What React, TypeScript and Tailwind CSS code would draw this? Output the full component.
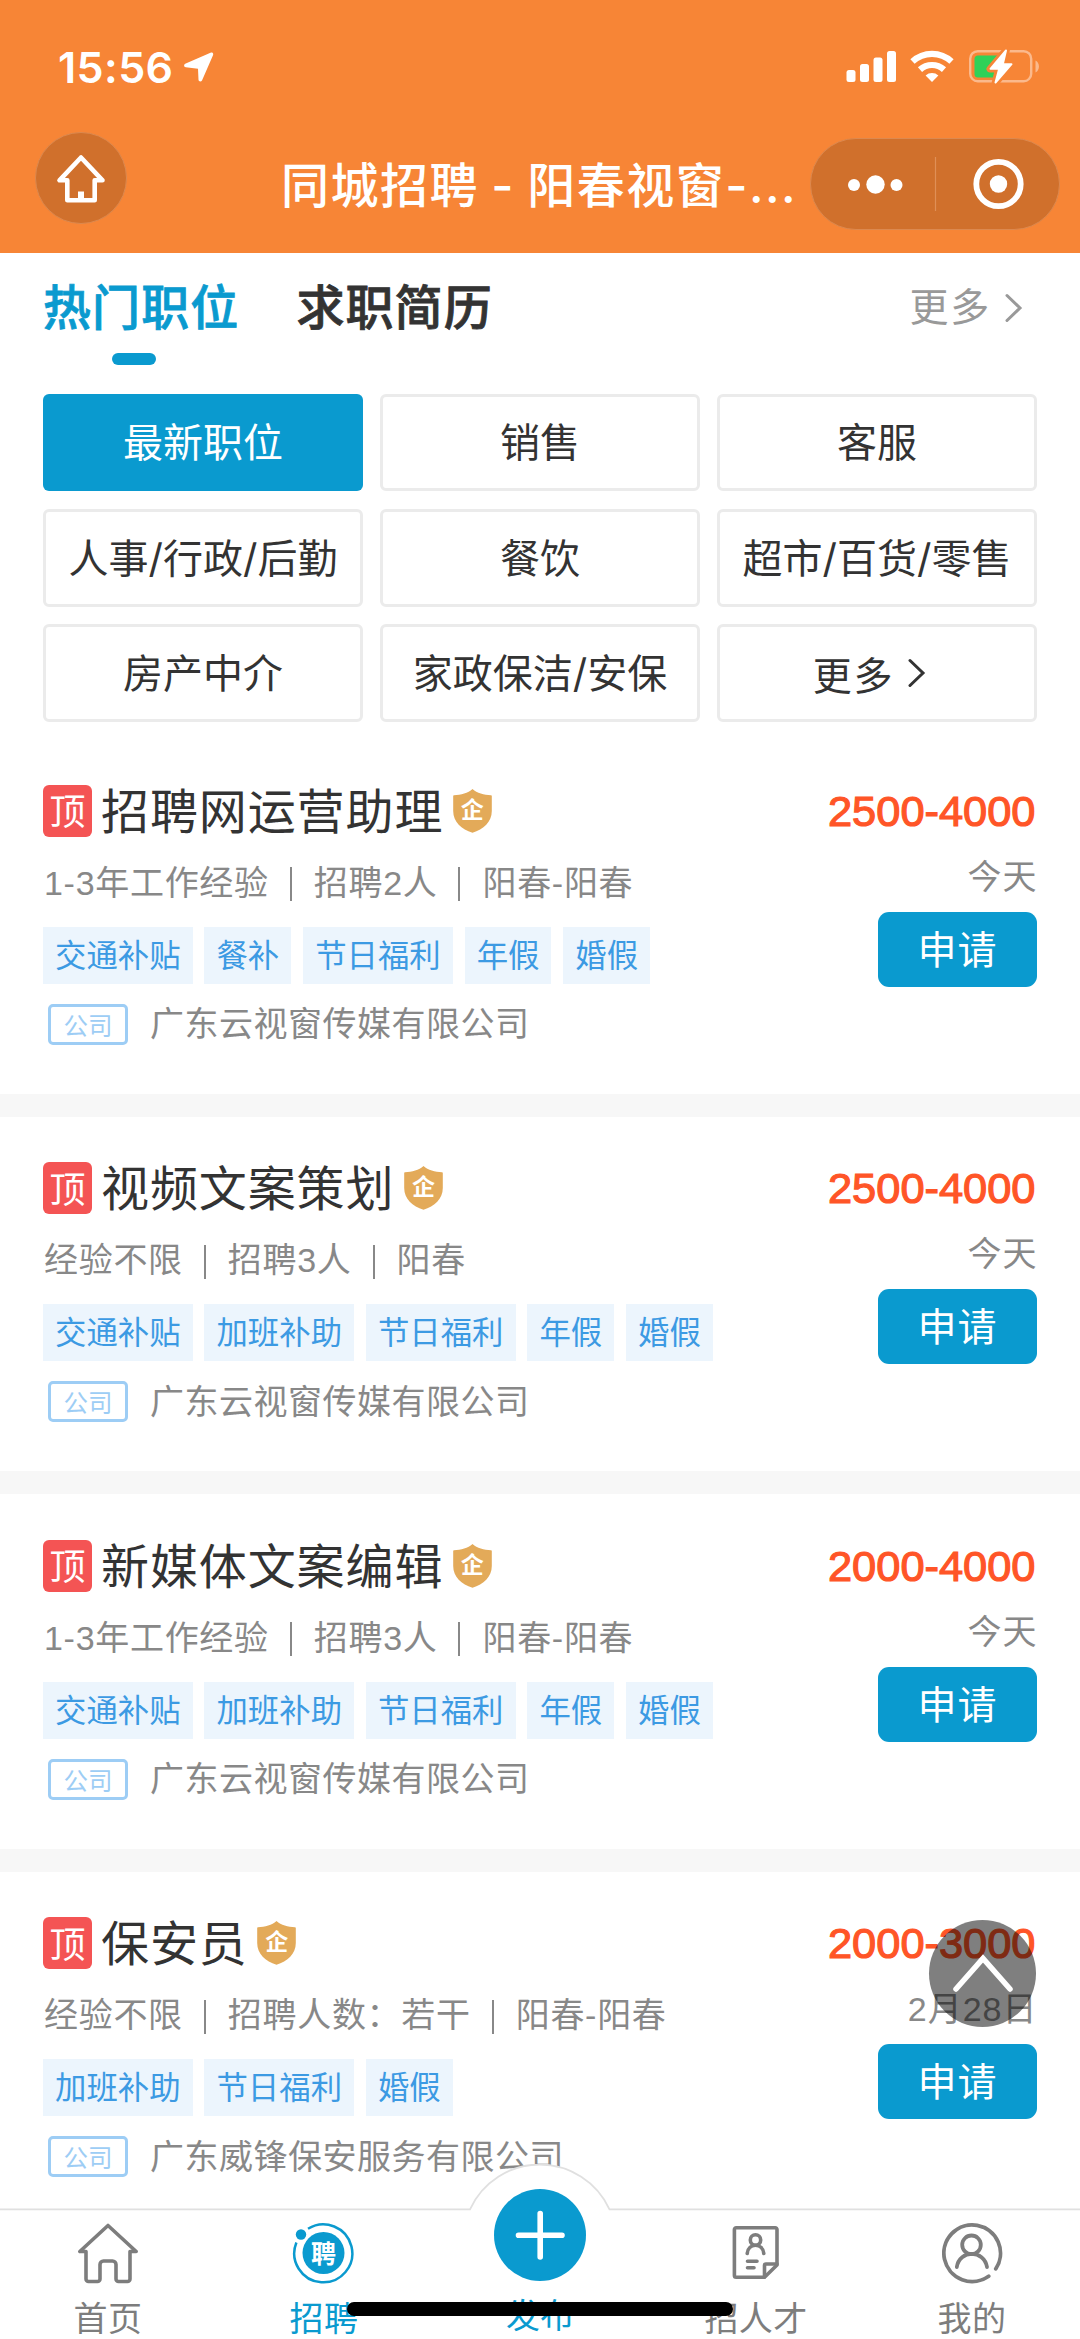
import React from "react";

type Job = {
  title: string;
  meta: string[];
  tags: string[];
  company: string;
  salary: string;
  date: string;
};

const categories = [
  "最新职位",
  "销售",
  "客服",
  "人事/行政/后勤",
  "餐饮",
  "超市/百货/零售",
  "房产中介",
  "家政保洁/安保",
];

const jobs: Job[] = [
  {
    title: "招聘网运营助理",
    meta: ["1-3年工作经验", "招聘2人", "阳春-阳春"],
    tags: ["交通补贴", "餐补", "节日福利", "年假", "婚假"],
    company: "广东云视窗传媒有限公司",
    salary: "2500-4000",
    date: "今天",
  },
  {
    title: "视频文案策划",
    meta: ["经验不限", "招聘3人", "阳春"],
    tags: ["交通补贴", "加班补助", "节日福利", "年假", "婚假"],
    company: "广东云视窗传媒有限公司",
    salary: "2500-4000",
    date: "今天",
  },
  {
    title: "新媒体文案编辑",
    meta: ["1-3年工作经验", "招聘3人", "阳春-阳春"],
    tags: ["交通补贴", "加班补助", "节日福利", "年假", "婚假"],
    company: "广东云视窗传媒有限公司",
    salary: "2000-4000",
    date: "今天",
  },
  {
    title: "保安员",
    meta: ["经验不限", "招聘人数：若干", "阳春-阳春"],
    tags: ["加班补助", "节日福利", "婚假"],
    company: "广东威锋保安服务有限公司",
    salary: "2000-3000",
    date: "2月28日",
  },
];

function Chevron({ className }: { className: string }) {
  return (
    <svg className={className} width="18" height="30" viewBox="0 0 18 30" fill="none" stroke="currentColor" strokeWidth="3" strokeLinecap="round">
      <path d="M2 2.5 15 15 2 27.5" />
    </svg>
  );
}

function StatusBar() {
  return (
    <div className="flex h-[132px] items-start justify-between pt-[46px] pr-[39px] pl-[58px]">
      <div className="flex items-center">
        <span className="h-[42px] w-[126px] font-['Inter'] text-[43px] leading-[42px] font-semibold tracking-[0.400px]">15:56</span>
        <svg className="-mt-px" width="30" height="30" viewBox="0 0 30 30" fill="currentColor">
          <path d="M1.200 11.800 26.500.700c1.900-.7 3.200.6 2.500 2.500L18 28.400c-.8 1.700-3.400 1.400-3.500-.6L14 16.800 1.800 15.300C-.2 15-.5 12.700 1.200 11.800Z" />
        </svg>
      </div>
      <svg width="195" height="38" viewBox="0 0 195 38">
        <g fill="#fff">
          <rect x="0.500" y="24" width="9" height="12" rx="2.500" />
          <rect x="14" y="18" width="9" height="18" rx="2.500" />
          <rect x="27.500" y="11.500" width="9" height="24.500" rx="2.500" />
          <rect x="41" y="5" width="9" height="31" rx="2.500" />
        </g>
        <g fill="none" stroke="#fff" strokeWidth="6.200">
          <path d="M66.500 15.600a28.500 28.500 0 0 1 39 0" />
          <path d="M74 23.600a18 18 0 0 1 24 0" />
        </g>
        <path d="M79.600 29.400a10 10 0 0 1 12.800 0L86 36Z" fill="#fff" />
        <rect x="124.200" y="5.200" width="61" height="30" rx="7.500" fill="none" stroke="#fbb98c" strokeWidth="2.400" />
        <path d="M189.500 14.500c4.600 2 4.600 10 0 12Z" fill="#fbb98c" />
        <path d="M132 9.500h21l-5 22h-16a3.500 3.500 0 0 1-3.500-3.500V13a3.500 3.500 0 0 1 3.500-3.500Z" fill="#30d158" />
        <path d="M160.500 3.500 144 23h8.500l-3.500 14.500L165.500 18H157.200Z" fill="#f78536" stroke="#f78536" strokeWidth="7" strokeLinejoin="round" />
        <path d="M160 4.500 144.500 22.800h8.700l-3.700 13.700L165.500 18.200H156.800Z" fill="#fff" stroke="#fff" strokeWidth="2" strokeLinejoin="round" />
      </svg>
    </div>
  );
}

function NavBar() {
  return (
    <div className="flex h-[121px] items-start">
      <div className="ml-[35px] flex h-[92px] w-[92px] items-center justify-center rounded-full border border-[#dc894f] bg-[#d0702c]">
        <svg width="52" height="52" viewBox="0 0 52 52" fill="none" stroke="#fff" strokeWidth="4.600" strokeLinejoin="round" strokeLinecap="round">
          <path d="M26 5.500 4.500 28.300h7.800v19.900h27.400V28.300h7.800Z" />
          <path d="M26 48v-8.500" strokeWidth="6" strokeLinecap="butt" />
        </svg>
      </div>
      <div className="mt-[25px] ml-[154px] h-[58px] w-[529px] font-['Inter','Noto_Sans_CJK_SC',sans-serif] text-[48px] leading-[58px] font-medium tracking-[1.500px] whitespace-nowrap [word-spacing:-2px]">
        同城招聘 - 阳春视窗-...
      </div>
      <div className="mt-[6px] flex h-[92px] w-[250px] items-center rounded-full border border-[#dc894f] bg-[#d0702c]">
        <svg width="248" height="90" viewBox="0 0 248 90">
          <g fill="#fff">
            <circle cx="43" cy="46" r="6" />
            <circle cx="64.500" cy="45.500" r="9.200" />
            <circle cx="85.500" cy="46" r="6" />
            <circle cx="187.500" cy="45" r="8.700" />
          </g>
          <circle cx="187.500" cy="45" r="22.200" fill="none" stroke="#fff" strokeWidth="5.800" />
          <path d="M124.500 18v54" stroke="#e08f57" strokeWidth="1.200" />
        </svg>
      </div>
    </div>
  );
}

function Shield() {
  return (
    <div className="relative flex h-[44px] w-[39px] justify-center">
      <svg className="absolute inset-0" width="39" height="44" viewBox="0 0 39 44" fill="#e3aa59">
        <path d="M19.500 0C24 4 31 6 38 6.300c.6 0 .8.300.8.800V22c0 11-8.300 18.500-19.300 21.800C8.500 40.500.2 33 .2 22V7.100c0-.5.2-.8.8-.8C8 6 15 4 19.500 0Z" />
      </svg>
      <span className="relative mt-[9px] text-[23px] leading-[24px] font-bold text-white">企</span>
    </div>
  );
}

function JobCard({ job }: { job: Job }) {
  return (
    <article className="flex h-[377.4px] shrink-0 justify-between border-b-[23px] border-[#f7f7f7] px-[43px] pt-[45.400px]">
      <div className="flex flex-col">
        <div className="flex h-[52px] items-center">
          <span className="flex h-[52px] w-[49px] items-center justify-center rounded-[6px] bg-[#f45454] text-[36px] leading-[52px] text-white">
            <span className="mt-[5px]">顶</span>
          </span>
          <h2 className="mt-[4px] ml-[9px] text-[48px] leading-[52px] font-normal tracking-[0.900px] text-[#333]">{job.title}</h2>
          <div className="ml-[9.500px]">
            <Shield />
          </div>
        </div>
        <div className="mt-[26px] ml-[1px] flex h-[41px] items-center text-[34px] leading-[41px] tracking-[0.700px] text-[#888]">
          {job.meta.map((m, i) => (
            <React.Fragment key={m}>
              {i > 0 && <span className="mr-[22px] ml-[21px] mt-[2px] h-[34px] w-[2px] bg-[#888]" />}
              <span>{m}</span>
            </React.Fragment>
          ))}
        </div>
        <div className="mt-[23px] flex h-[57px] gap-[11.900px] text-[31.400px] leading-[59px] text-[#3c9ae3]">
          {job.tags.map((t) => (
            <span key={t} className="bg-[#ecf5fd] px-[12px]">
              {t}
            </span>
          ))}
        </div>
        <div className="mt-[20px] flex h-[41px] items-center">
          <span className="ml-[5px] flex h-[41px] w-[80px] items-center justify-center rounded-[5px] border-[3px] border-[#9dcdf5] text-[24.500px] leading-[36px] text-[#9dcdf5]">
            <span className="mt-[5px]">公司</span>
          </span>
          <span className="mt-px ml-[22px] text-[34px] leading-[41px] tracking-[0.500px] text-[#888]">{job.company}</span>
        </div>
      </div>
      <div className="flex flex-col items-end">
        <div className="mr-[1.500px] h-[52px] text-[43.400px] leading-[53px] text-[#ff5527] [-webkit-text-stroke:1.200px_#ff5527]">{job.salary}</div>
        <div className="mt-[19px] mr-[-0.500px] h-[41px] text-[34px] leading-[43px] tracking-[1px] text-[#888]">{job.date}</div>
        <button className="mt-[15px] h-[75px] w-[159px] rounded-[11px] bg-[#0a9acf] pt-[2px] text-[39px] leading-[73px] tracking-[1px] text-white">申请</button>
      </div>
    </article>
  );
}

function TabItem({ label, active, children }: { label: string; active?: boolean; children: React.ReactNode }) {
  return (
    <div className={active ? "flex w-[216px] flex-col items-center text-[#0a9acf]" : "flex w-[216px] flex-col items-center text-[#7d7d7d]"}>
      <div className="mt-[12px] h-[64px]">{children}</div>
      <span className="mt-[15px] text-[34px] leading-[40px] tracking-[0.400px]">{label}</span>
    </div>
  );
}

function BottomBar() {
  return (
    <nav className="absolute bottom-0 left-0 h-[175px] w-[1080px]">
      <svg className="absolute inset-0" width="1080" height="175" viewBox="0 0 1080 175">
        <path d="M-2 45.300H470A76.700 76.700 0 0 1 609.500 45.300H1082V180H-2Z" fill="#fff" stroke="#e0e0e0" strokeWidth="1.800" />
      </svg>
      <div className="relative flex pt-[44px]">
        <TabItem label="首页">
          <svg className="-ml-px" width="64" height="64" viewBox="0 0 64 64" fill="none" stroke="currentColor" strokeWidth="3.600" strokeLinejoin="round">
            <path d="M32 5.500 3.800 31.500H10V59a2.500 2.500 0 0 0 2.500 2.500h9A2.500 2.500 0 0 0 24 59V44.500a3.500 3.500 0 0 1 3.500-3.500h9a3.500 3.500 0 0 1 3.500 3.500V59a2.500 2.500 0 0 0 2.500 2.500h9A2.500 2.500 0 0 0 54 59V31.500h6.200Z" />
          </svg>
        </TabItem>
        <TabItem label="招聘" active>
          <div className="relative flex h-[64px] w-[64px] items-center justify-center">
            <svg className="absolute inset-0" width="64" height="64" viewBox="0 0 64 64">
              <circle cx="31.500" cy="33" r="21" fill="currentColor" />
              <circle cx="9" cy="14.500" r="5.200" fill="currentColor" />
              <path d="M16 8.700A29 29 0 1 1 4.400 22.500" fill="none" stroke="currentColor" strokeWidth="2.500" />
            </svg>
            <span className="relative mt-[3px] -ml-px text-[25px] leading-[28px] font-bold text-white">聘</span>
          </div>
        </TabItem>
        <div className="flex w-[216px] flex-col items-center text-[#0a9acf]">
          <div className="-mt-[19px] h-[92px]">
            <svg width="92" height="92" viewBox="0 0 92 92">
              <circle cx="46" cy="46" r="46" fill="#0a9acf" />
              <path d="M24.500 46.200h43.500M46.200 24.500v43.500" stroke="#fff" strokeWidth="5.600" strokeLinecap="round" />
            </svg>
          </div>
          <span className="mt-[15px] text-[34px] leading-[40px]">发布</span>
        </div>
        <TabItem label="招人才">
          <svg width="64" height="64" viewBox="0 0 64 64" fill="none" stroke="currentColor" strokeWidth="3.600" strokeLinejoin="round" strokeLinecap="round">
            <path d="M53 45V9.500a1.800 1.800 0 0 0-1.800-1.800h-39a1.800 1.800 0 0 0-1.800 1.800v46a1.800 1.800 0 0 0 1.800 1.800H40.500Z" />
            <path d="M40.500 57V45.500a1.500 1.500 0 0 1 1.500-1.500H53" />
            <circle cx="31.500" cy="20" r="5.200" />
            <path d="M23.200 33.500c1-11 15.600-11 16.600 0M23.500 41.200h9.500M23.500 47.800h6.500" />
          </svg>
        </TabItem>
        <TabItem label="我的">
          <svg width="64" height="64" viewBox="0 0 64 64" fill="none" stroke="currentColor" strokeWidth="3.800" strokeLinecap="round">
            <path d="M48.700 56.200A28.300 28.300 0 1 1 55.800 48.800" />
            <circle cx="31.500" cy="24.800" r="9.300" />
            <path d="M16.800 47c2.500-17.500 27.400-17.500 30.200 0" />
          </svg>
        </TabItem>
      </div>
    </nav>
  );
}

export default function App() {
  return (
    <div className="relative flex h-[2339px] w-[1080px] flex-col overflow-hidden bg-white font-['Liberation_Sans','Noto_Sans_CJK_SC',sans-serif]">
      <header className="h-[253px] shrink-0 bg-[#f78536] text-white">
        <StatusBar />
        <NavBar />
      </header>

      <section className="h-[486.600px] shrink-0 px-[43px]">
        <div className="flex h-[140.500px] items-start justify-between pt-[26px]">
          <div className="flex gap-[57px] text-[48px] leading-[60px] font-medium tracking-[1.100px] text-[#333] [-webkit-text-stroke:0.800px_currentColor]">
            <div className="flex flex-col items-center text-[#0a9acf]">
              <span>热门职位</span>
              <span className="mt-[14px] -ml-[15px] h-[12px] w-[44px] rounded-full bg-[#0a9acf]" />
            </div>
            <span>求职简历</span>
          </div>
          <div className="-mt-px mr-[14px] flex items-center text-[39px] leading-[60px] tracking-[1.800px] text-[#999]">
            更多
            <Chevron className="ml-[14px]" />
          </div>
        </div>
        <div className="grid grid-cols-3 gap-x-[17px] gap-y-[17.500px] font-['Inter','Noto_Sans_CJK_SC',sans-serif]">
          {categories.map((c, i) => (
            <button
              key={c}
              className={
                i === 0
                  ? "h-[97.800px] rounded-[6px] bg-[#0a9acf] pt-[2px] text-[40px] text-white"
                  : "h-[97.800px] rounded-[6px] border-[3px] border-[#ebebeb] pt-[2px] text-[40px] whitespace-nowrap text-[#333]"
              }
            >
              {c}
            </button>
          ))}
          <button className="flex h-[97.800px] items-center justify-center rounded-[6px] border-[3px] border-[#ebebeb] pr-[15px] text-[39px] tracking-[1.800px] text-[#333]">
            <span className="mt-[7px]">更多</span>
            <Chevron className="ml-[14px]" />
          </button>
        </div>
      </section>

      {jobs.map((j) => (
        <JobCard key={j.title} job={j} />
      ))}

      <div className="absolute top-[1920px] left-[929px] h-[107px] w-[107px] rounded-full bg-black/50">
        <svg width="107" height="107" viewBox="0 0 107 107" fill="none" stroke="#fff" strokeWidth="5.500" strokeLinecap="round" strokeLinejoin="miter">
          <path d="M27 69 54 38.500 81 69" />
        </svg>
      </div>

      <BottomBar />
      <div className="absolute top-[2302px] left-[347px] h-[14px] w-[386px] rounded-full bg-black" />
    </div>
  );
}
